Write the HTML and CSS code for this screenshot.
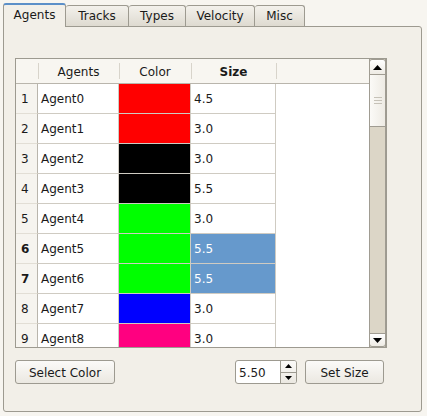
FILE: index.html
```html
<!DOCTYPE html>
<html>
<head>
<meta charset="utf-8">
<link rel="stylesheet" href="styles.css">
</head>
<body>
<div class="window">
  <div class="tabs">
    <div class="tab active">Agents</div>
    <div class="tab">Tracks</div>
    <div class="tab">Types</div>
    <div class="tab">Velocity</div>
    <div class="tab">Misc</div>
  </div>
  <div class="panel">
    <div class="table-frame">
      <div class="grid-area">
        <div class="row head">
          <div class="c rh"></div>
          <div class="c c1">Agents</div>
          <div class="c c2">Color</div>
          <div class="c c3 bold">Size</div>
          <div class="c rest"></div>
        </div>
        <div class="row"><div class="c rh">1</div><div class="c c1">Agent0</div><div class="c c2" style="background:#ff0000"></div><div class="c c3">4.5</div><div class="c rest"></div></div>
        <div class="row"><div class="c rh">2</div><div class="c c1">Agent1</div><div class="c c2" style="background:#ff0000"></div><div class="c c3">3.0</div><div class="c rest"></div></div>
        <div class="row"><div class="c rh">3</div><div class="c c1">Agent2</div><div class="c c2" style="background:#000000"></div><div class="c c3">3.0</div><div class="c rest"></div></div>
        <div class="row"><div class="c rh">4</div><div class="c c1">Agent3</div><div class="c c2" style="background:#000000"></div><div class="c c3">5.5</div><div class="c rest"></div></div>
        <div class="row"><div class="c rh">5</div><div class="c c1">Agent4</div><div class="c c2" style="background:#00ff00"></div><div class="c c3">3.0</div><div class="c rest"></div></div>
        <div class="row"><div class="c rh bold">6</div><div class="c c1">Agent5</div><div class="c c2" style="background:#00ff00"></div><div class="c c3 sel">5.5</div><div class="c rest"></div></div>
        <div class="row"><div class="c rh bold">7</div><div class="c c1">Agent6</div><div class="c c2" style="background:#00ff00"></div><div class="c c3 sel">5.5</div><div class="c rest"></div></div>
        <div class="row"><div class="c rh">8</div><div class="c c1">Agent7</div><div class="c c2" style="background:#0000ff"></div><div class="c c3">3.0</div><div class="c rest"></div></div>
        <div class="row"><div class="c rh">9</div><div class="c c1">Agent8</div><div class="c c2" style="background:#ff0080"></div><div class="c c3">3.0</div><div class="c rest"></div></div>
      </div>
      <div class="scrollbar">
        <div class="sb-btn up"><svg width="9" height="5" viewBox="0 0 9 5"><path d="M0 5 L4.5 0 L9 5 Z" fill="#000"/></svg></div>
        <div class="sb-thumb"><span></span><span></span><span></span></div>
        <div class="sb-trough"></div>
        <div class="sb-btn down"><svg width="9" height="5" viewBox="0 0 9 5"><path d="M0 0 L4.5 5 L9 0 Z" fill="#000"/></svg></div>
      </div>
    </div>
    <div class="controls">
      <div class="btn select">Select Color</div>
      <div class="spacer"></div>
      <div class="spin">
        <div class="spin-val">5.50</div>
        <div class="spin-arrows">
          <div class="sa"><svg width="7" height="4" viewBox="0 0 7 4"><path d="M0 4 L3.5 0 L7 4 Z" fill="#000"/></svg></div>
          <div class="sa"><svg width="7" height="4" viewBox="0 0 7 4"><path d="M0 0 L3.5 4 L7 0 Z" fill="#000"/></svg></div>
        </div>
      </div>
      <div class="btn setsize">Set Size</div>
    </div>
  </div>
</div>
</body>
</html>
```
FILE: styles.css
```css
html, body {
  margin: 0;
  padding: 0;
  background: #f7f5f0;
  font-family: "DejaVu Sans", sans-serif;
  font-size: 12px;
  color: #1a1a1a;
}
.window {
  width: 427px;
  height: 416px;
  padding: 3px 0 0 3px;
  box-sizing: border-box;
}
.tabs {
  display: flex;
  align-items: flex-end;
  height: 23px;
  position: relative;
  z-index: 2;
}
.tab {
  height: 21px;
  box-sizing: border-box;
  border: 1px solid #9d9a90;
  border-bottom: none;
  border-left: none;
  border-radius: 3px 3px 0 0;
  background: linear-gradient(#f3f1ec, #dedad0);
  display: flex;
  align-items: center;
  justify-content: center;
  padding-bottom: 1px;
  font-size: 12px;
  margin-bottom: 0;
}
.tab:nth-child(2) { width: 63px; }
.tab:nth-child(3) { width: 57px; }
.tab:nth-child(4) { width: 69px; }
.tab:nth-child(5) { width: 50px; }
.tab.active {
  width: 63px;
  height: 24px;
  margin-bottom: -1px;
  border-left: 1px solid #9d9a90;
  border-top: 2px solid #5b8fc8;
  background: #f2efe8;
  padding-bottom: 3px;
}
.panel {
  width: 419px;
  height: 386px;
  box-sizing: border-box;
  border: 1px solid #9d9a90;
  border-radius: 0 3px 3px 3px;
  background: #f2efe8;
  padding: 31px 0 0 11px;
  display: flex;
  flex-direction: column;
}
.table-frame {
  width: 372px;
  height: 290px;
  box-sizing: border-box;
  border: 1px solid #9d9a90;
  background: #fff;
  display: flex;
  overflow: hidden;
}
.grid-area {
  width: 353px;
  height: 288px;
  overflow: hidden;
}
.row {
  display: flex;
  height: 30px;
}
.row.head {
  height: 25px;
  background: #f8f6f1;
}
.c {
  box-sizing: border-box;
  border-right: 1px solid #cfcbc2;
  border-bottom: 1px solid #cfcbc2;
  display: flex;
  align-items: center;
  padding-top: 1px;
}
.rh { width: 22px; background: #f6f4ef; padding-left: 5px; border-bottom-color: #e2ded5; border-right-color: #b9b5ac; }
.c1 { width: 81px; padding-left: 3px; }
.c2 { width: 72px; }
.c3 { width: 85px; padding-left: 3px; }
.rest { flex: 1; border-right: none; border-bottom: none; }
.head .c { justify-content: center; padding-left: 0; border-right: none; border-bottom: 1px solid #b9b5ac; position: relative; }
.head .c::after {
  content: "";
  position: absolute;
  right: -1px;
  top: 4px;
  bottom: 4px;
  width: 1px;
  background: #d8d4cb;
}
.head .rest::after { display: none; }
.head .c1, .head .c2, .head .c3 { width: auto; }
.head .rh { width: 22px; background: #f8f6f1; }
.head .c1 { width: 81px; }
.head .c2 { width: 72px; }
.head .c3 { width: 85px; }
.bold { font-weight: bold; }
.sel { background: #6699cc; color: #fff; }
.scrollbar {
  width: 17px;
  height: 288px;
  display: flex;
  flex-direction: column;
  box-sizing: border-box;
  border-left: 1px solid #a09c92;
  border-right: 1px solid #a09c92;
  background: #dcd6c7;
}
.sb-btn {
  height: 16px;
  box-sizing: border-box;
  display: flex;
  align-items: center;
  justify-content: center;
  background: linear-gradient(#ffffff, #eeebe4);
  border: 1px solid #a09c92;
  margin: 0 -1px;
}
.sb-btn.up { border-radius: 3px 3px 0 0; }
.sb-btn.down { border-radius: 0 0 3px 3px; height: 14px; }
.sb-thumb {
  height: 52px;
  box-sizing: border-box;
  background: linear-gradient(90deg, #fbfaf7, #eeebe4);
  border-bottom: 1px solid #a09c92;
  display: flex;
  flex-direction: column;
  align-items: center;
  justify-content: center;
  gap: 2px;
}
.sb-thumb span {
  display: block;
  width: 8px;
  height: 1px;
  background: #c6c2b8;
}
.sb-trough { flex: 1; }
.controls {
  display: flex;
  align-items: center;
  margin-top: 12px;
  height: 24px;
  width: 370px;
}
.btn {
  height: 24px;
  box-sizing: border-box;
  border: 1px solid #9d9a90;
  border-radius: 3px;
  background: linear-gradient(#fbfaf8, #ebe8e1);
  display: flex;
  align-items: center;
  justify-content: center;
  padding-top: 1px;
}
.select { width: 100px; }
.spacer { flex: 1; }
.spin {
  width: 62px;
  height: 24px;
  box-sizing: border-box;
  border: 1px solid #9d9a90;
  border-radius: 3px;
  background: #fff;
  display: flex;
  margin-right: 8px;
  overflow: hidden;
}
.spin-val {
  flex: 1;
  display: flex;
  align-items: center;
  padding-left: 3px;
  padding-top: 1px;
}
.spin-arrows {
  width: 15px;
  display: flex;
  flex-direction: column;
  border-left: 1px solid #9d9a90;
  background: linear-gradient(#fbfaf8, #ebe8e1);
}
.sa {
  flex: 1;
  display: flex;
  align-items: center;
  justify-content: center;
}
.sa:first-child { border-bottom: 1px solid #9d9a90; }
.setsize { width: 79px; margin-right: 1px; }
```
